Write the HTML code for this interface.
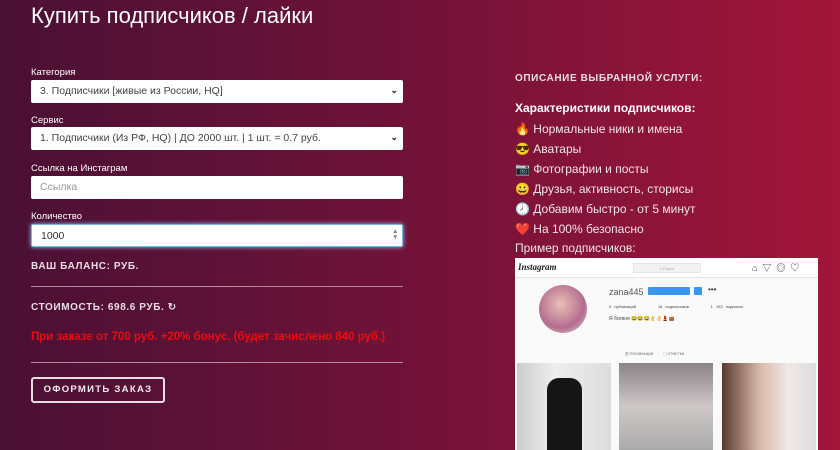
<!DOCTYPE html>
<html><head><meta charset="utf-8"><style>
*{margin:0;padding:0;box-sizing:border-box}
body{width:840px;height:450px;overflow:hidden;background:linear-gradient(90deg,#4a1034 0%,#6e1238 45%,#a3153a 100%);font-family:"Liberation Sans","Noto Sans CJK SC",sans-serif;color:#fff;position:relative}
.a{position:absolute}
h1{position:absolute;left:31px;top:3px;font-size:22px;font-weight:normal;color:#fff}
.lbl{position:absolute;left:31px;font-size:9.5px;color:#fff}
.box{position:absolute;left:31px;width:372px;height:23px;background:#fff;border-radius:2px;font-size:10.5px;color:#444;padding:5px 9px}
.chev{position:absolute;right:5px;top:5px;font-size:9px;color:#222;font-weight:bold}
.cap{font-size:10px;font-weight:bold;letter-spacing:.6px;color:#e8dde3}
.line{position:absolute;left:31px;width:372px;height:1px;background:#b58a9e}
.li{position:absolute;left:515px;font-size:12px;color:#f1e6ea}
</style></head><body>
<h1>Купить подписчиков / лайки</h1>
<div class="lbl" style="top:67px">Категория</div>
<div class="box" style="top:80px">3. Подписчики [живые из России, HQ]<span class="chev">⌄</span></div>
<div class="lbl" style="top:115px">Сервис</div>
<div class="box" style="top:127px">1. Подписчики (Из РФ, HQ) | ДО 2000 шт. | 1 шт. = 0.7 руб.<span class="chev">⌄</span></div>
<div class="lbl" style="top:163px">Ссылка на Инстаграм</div>
<div class="box" style="top:176px;color:#999">Ссылка</div>
<div class="lbl" style="top:211px">Количество</div>
<div class="box" style="top:224px;border:1px solid #7ab4ee;box-shadow:0 0 5px #8fc3ff;color:#333">1000<span class="chev" style="font-size:7px;top:4px;line-height:6px;color:#888">▴<br>▾</span></div>
<div class="a cap" style="left:31px;top:261px">ВАШ БАЛАНС: РУБ.</div>
<div class="line" style="top:286px"></div>
<div class="a cap" style="left:31px;top:302px">СТОИМОСТЬ: 698.6 РУБ. ↻</div>
<div class="a" style="left:31px;top:331px;font-size:11.5px;font-weight:bold;color:#f00a0a">При заказе от 700 руб. +20% бонус. (будет зачислено 840 руб.)</div>
<div class="line" style="top:362px"></div>
<div class="a" style="left:31px;top:377px;width:134px;height:26px;border:2px solid #e8dde3;border-radius:3px;font-size:9.5px;font-weight:bold;letter-spacing:1.3px;text-align:center;line-height:22px;color:#eee">ОФОРМИТЬ ЗАКАЗ</div>

<div class="a cap" style="left:515px;top:73px">ОПИСАНИЕ ВЫБРАННОЙ УСЛУГИ:</div>
<div class="a" style="left:515px;top:101px;font-size:12px;font-weight:bold">Характеристики подписчиков:</div>
<div class="li" style="top:122px">🔥 Нормальные ники и имена</div>
<div class="li" style="top:142px">😎 Аватары</div>
<div class="li" style="top:162px">📷 Фотографии и посты</div>
<div class="li" style="top:182px">😀 Друзья, активность, сторисы</div>
<div class="li" style="top:202px">🕗 Добавим быстро - от 5 минут</div>
<div class="li" style="top:222px">❤️ На 100% безопасно</div>
<div class="li" style="top:241px">Пример подписчиков:</div>

<div class="a" style="left:515px;top:258px;width:303px;height:192px;background:#fafafa">
 <div class="a" style="left:0;top:0;width:303px;height:20px;background:#fff;border-bottom:1px solid #e5e5e5"></div>
 <div class="a" style="left:3px;top:4px;font-size:9px;font-family:'Liberation Serif',serif;font-style:italic;font-weight:bold;color:#222">Instagram</div>
 <div class="a" style="left:118px;top:5px;width:68px;height:10px;background:#f2f2f2;border:1px solid #e5e5e5;font-size:4px;color:#aaa;text-align:center;line-height:9px">⌕ Поиск</div>
 <div class="a" style="left:237px;top:3px;font-size:9px;color:#333;letter-spacing:5px">⌂▽◎♡</div>
 <div class="a" style="left:24px;top:27px;width:48px;height:48px;border-radius:50%;background:radial-gradient(circle at 45% 40%,#e8c0b8,#b56d8f 60%,#ddd)"></div>
 <div class="a" style="left:94px;top:29px;font-size:9px;color:#555">zana445</div>
 <div class="a" style="left:133px;top:29px;width:42px;height:8px;background:#3897f0;border-radius:1px"></div>
 <div class="a" style="left:179px;top:29px;width:8px;height:8px;background:#3897f0;border-radius:1px"></div>
 <div class="a" style="left:193px;top:27px;font-size:8px;color:#333">•••</div>
 <div class="a" style="left:94px;top:46px;font-size:4px;color:#444;word-spacing:2px">5 публикаций &nbsp;&nbsp;&nbsp;&nbsp;&nbsp; 16 подписчиков &nbsp;&nbsp;&nbsp;&nbsp;&nbsp; 1 193 подписок</div>
 <div class="a" style="left:94px;top:58px;font-size:5px;color:#444">Я богиня 😂😂😂👌👌💄👜</div>
 <div class="a" style="left:110px;top:94px;font-size:3.5px;color:#666">▦ ПУБЛИКАЦИИ &nbsp;&nbsp;&nbsp;&nbsp;&nbsp;&nbsp;&nbsp;&nbsp; ▢ ОТМЕТКИ</div>
 <div class="a" style="left:2px;top:105px;width:94px;height:87px;background:linear-gradient(90deg,#ccc,#eee 40%,#ddd);"><div class="a" style="left:30px;top:15px;width:35px;height:72px;background:#151515;border-radius:12px 12px 0 0"></div></div>
 <div class="a" style="left:104px;top:105px;width:94px;height:87px;background:linear-gradient(180deg,#8a8488,#cfc8c8 50%,#aaa)"></div>
 <div class="a" style="left:207px;top:105px;width:94px;height:87px;background:linear-gradient(90deg,#5a3a30,#d8b8a8 40%,#f0e8e6 70%,#ddd)"></div>
</div>
</body></html>
